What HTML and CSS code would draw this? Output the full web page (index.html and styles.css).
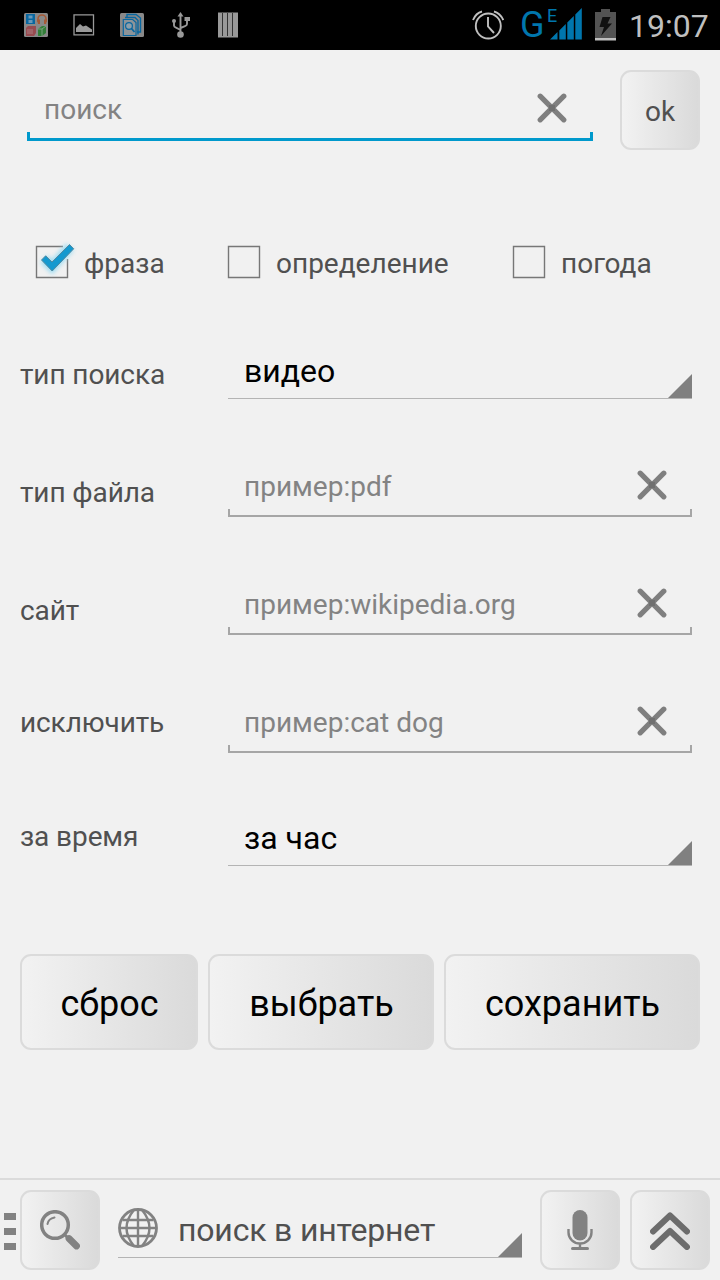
FILE: index.html
```html
<!DOCTYPE html>
<html lang="ru">
<head>
  <meta charset="UTF-8" />
  <title>поиск</title>
  <link rel="stylesheet" href="styles.css">
</head>
<body>

  <svg class="defs" width="0" height="0">
    <symbol id="clear" viewBox="0 0 30 30">
      <path d="M3.2 3.2L26.8 26.8M26.8 3.2L3.2 26.8" fill="none" stroke="#7f7f7f" stroke-width="5.2" stroke-linecap="round"/>
      <rect x="12" y="12" width="6" height="6" fill="#707070"/>
    </symbol>
  </svg>

  <div class="status-bar">
    <div class="notifications">
      <svg width="24" height="24" viewBox="0 0 24 24">
        <rect width="24" height="24" rx="1.5" fill="#898989"/>
        <path d="M2 1h9v10H2z" fill="#0867a0"/>
        <path d="M4.5 2.5h4v3h-4zM4.5 7h4v3h-4z" fill="#6898b8"/>
        <path d="M14 9V6a4 4 0 0 1 8 0v3" fill="none" stroke="#a65a36" stroke-width="1.6"/>
        <path d="M13 6.5h3V11h-2zM20 6.5h3l-1 4.5h-2z" fill="#a65a36"/>
        <path d="M2 15l2-2h8v7l-2 3H2z" fill="#984b50"/>
        <path d="M3 16h6v5H3z" fill="#a16468"/>
        <path d="M14 16l4-3h4v7l-4 3h-4z" fill="#327e38"/>
        <path d="M14 16h4v7M18 16l4-3" fill="none" stroke="#79a17c"/>
      </svg>
      <svg width="24" height="24" viewBox="0 0 24 24">
        <path d="M2 1.8h19.5v20H2z" fill="none" stroke="#999" stroke-width="1.3"/>
        <path d="M4 19v-4l4-4 3 2.5 3-1 6 4V19z" fill="#999"/>
      </svg>
      <svg width="24" height="24" viewBox="0 0 24 24">
        <rect width="24" height="24" rx="1.5" fill="#898989"/>
        <path d="M7 5V1.500h9L20.500 5v14H17M5 4.500h10L18 7.500v14" fill="none" stroke="#0867a0" stroke-width="1.400"/>
        <path d="M3.300 6.500h9.400l3.300 3v13H3.300z" fill="#8d9499" stroke="#0867a0" stroke-width="1.200"/>
        <circle cx="9" cy="13" r="3.400" fill="#8d9fab" stroke="#0867a0" stroke-width="1.200"/>
        <path d="M11.500 15.500l3 3.500" stroke="#0867a0" stroke-width="1.800"/>
      </svg>
      <svg width="24" height="26" viewBox="0 0 24 26">
        <path d="M12.500 4v18M6 10v3.500q0 1.500 2 2.200l4.500 2.300M19 8v4q0 1.500-2 2.200L12.500 16" fill="none" stroke="#999" stroke-width="1.900"/>
        <path d="M12.500 0l3 4.500h-6z" fill="#999"/>
        <circle cx="6" cy="9" r="2" fill="#999"/>
        <path d="M16.500 5H22v4h-5.500z" fill="#999"/>
        <circle cx="12.500" cy="22.500" r="3.300" fill="#999"/>
      </svg>
      <svg width="24" height="26" viewBox="0 0 24 26">
        <path d="M2 .5h20v25H2z" fill="#999"/>
        <path d="M6.500 1v23M11.500 1v23M16.500 1v23" stroke="#333" stroke-width="1"/>
      </svg>
    </div>
    <div class="system">
      <svg class="alarm" width="32" height="30" viewBox="0 0 32 30">
        <g fill="none" stroke="#bfbfbf" stroke-width="1.900">
          <circle cx="16.300" cy="16" r="12.500"/>
          <path d="M16 7v9.500l6 6.500M1 10Q4 3 10 1.500M31.300 10Q28 3 22 1.500"/>
        </g>
      </svg>
      <div class="network">G</div>
      <svg class="signal" width="34" height="34" viewBox="0 0 34 34">
        <text class="edge" x="-2" y="15">E</text>
        <path d="M1 32.500L8.500 25v7.500zM10.300 23.500L16.800 17v15.500h-6.500zM18.300 15.500L24.800 9v23.500h-6.500zM26.300 7.500L32.800 1v31.500h-6.500z" fill="#0076ad"/>
      </svg>
      <svg class="battery" width="22" height="32" viewBox="0 0 22 32">
        <path d="M6 0h9v3h6v26H0V3h6z" fill="#535353"/>
        <path d="M7.500 8h8l-3 6.500H17L6 27l3-9H4.500z" fill="#111"/>
        <path d="M0 29h21v2.500H0z" fill="#bfbfbf"/>
      </svg>
      <div class="clock">19:07</div>
    </div>
  </div>

  <div class="search-row">
    <div class="search-field field">
      <span>поиск</span>
      <svg class="clear" width="30" height="30"><use href="#clear"/></svg>
    </div>
    <button class="btn ok">ok</button>
  </div>

  <div class="checks">
    <div class="check">
      <svg width="42" height="42" viewBox="0 0 42 42">
        <path d="M28 6.500H1.500v31h31V19" fill="none" stroke="#777" stroke-width="1.400"/>
        <path class="glow" d="M9 19l8 8L35 7" fill="none" stroke="#9bdcf2" stroke-width="10"/>
        <path d="M6.500 20l4.200-4.200 6.300 6.200L34.500 4.500l4.200 4.300L17.200 31z" fill="#1499cf" stroke="#5289a0" stroke-width="1"/>
      </svg>
      <span>фраза</span>
    </div>
    <div class="check">
      <svg width="42" height="42" viewBox="0 0 42 42">
        <path d="M1.500 6.500h31v31h-31z" fill="none" stroke="#777" stroke-width="1.400"/>
      </svg>
      <span>определение</span>
    </div>
    <div class="check">
      <svg width="42" height="42" viewBox="0 0 42 42">
        <path d="M1.500 6.500h31v31h-31z" fill="none" stroke="#777" stroke-width="1.400"/>
      </svg>
      <span>погода</span>
    </div>
  </div>

  <div class="form">
    <div class="row">
      <div class="label">тип поиска</div>
      <div class="select"><span>видео</span><i class="corner"></i></div>
    </div>
    <div class="row">
      <div class="label">тип файла</div>
      <div class="field">
        <span>пример:pdf</span>
        <svg class="clear" width="30" height="30"><use href="#clear"/></svg>
      </div>
    </div>
    <div class="row">
      <div class="label">сайт</div>
      <div class="field">
        <span>пример:wikipedia.org</span>
        <svg class="clear" width="30" height="30"><use href="#clear"/></svg>
      </div>
    </div>
    <div class="row raised">
      <div class="label">исключить</div>
      <div class="field">
        <span>пример:cat dog</span>
        <svg class="clear" width="30" height="30"><use href="#clear"/></svg>
      </div>
    </div>
    <div class="row raised last">
      <div class="label">за время</div>
      <div class="select"><span>за час</span><i class="corner"></i></div>
    </div>
  </div>

  <div class="actions">
    <button class="btn">сброс</button>
    <button class="btn">выбрать</button>
    <button class="btn">сохранить</button>
  </div>

  <div class="bottom-bar">
    <div class="grip"><i></i><i></i><i></i></div>
    <button class="btn">
      <svg width="40" height="40" viewBox="0 0 40 40">
        <g fill="none" stroke="#828282" stroke-linecap="round">
          <circle cx="15" cy="15" r="13.300" stroke-width="3.500"/>
          <path d="M7.500 14Q8.500 8.500 14.500 7.500" stroke-width="2"/>
          <path d="M29 28.500l7.500 7.500" stroke-width="6.800"/>
          <path d="M25 25l4 4" stroke-width="3"/>
        </g>
      </svg>
    </button>
    <div class="engine select">
      <svg width="40" height="40" viewBox="0 0 40 40">
        <g fill="none" stroke="#828282" stroke-width="2.400">
          <circle cx="20" cy="20" r="18.500" stroke-width="2.800"/>
          <path d="M20 1v38M1 20h38M4.500 12h31M4.500 28h31"/>
          <path d="M16 2Q1 20 16 38M24 2Q39 20 24 38"/>
        </g>
      </svg>
      <span>поиск в интернет</span>
      <i class="corner"></i>
    </div>
    <button class="btn mic">
      <svg width="40" height="40" viewBox="0 0 40 40">
        <rect x="12.500" y="0" width="15" height="30.500" rx="7.500" fill="#828282"/>
        <path d="M8.500 19v3.500a11.500 11 0 0 0 23 0V19M20 33.500V38" fill="none" stroke="#828282" stroke-width="2.400"/>
        <path d="M12.500 38.500h15" stroke="#828282" stroke-width="3" stroke-linecap="round"/>
      </svg>
    </button>
    <button class="btn">
      <svg width="40" height="40" viewBox="0 0 40 40">
        <path d="M3 21.500L20 5.500l17 16M3 37l17-16 17 16" fill="none" stroke="#6c6c6c" stroke-width="6" stroke-linecap="round" stroke-linejoin="round"/>
      </svg>
    </button>
  </div>

</body>
</html>
```

FILE: styles.css
```css
* { box-sizing: border-box; }
body {
  margin: 0;
  width: 720px; height: 1280px;
  display: flex; flex-direction: column;
  background: #f1f1f1; color: #505050;
  font-family: Roboto, "Noto Sans", sans-serif; font-size: 28px;
  overflow: hidden;
}
svg { display: block; flex: none; }
span { white-space: nowrap; }
.defs { display: none; }

.status-bar {
  height: 50px; flex: none;
  display: flex; align-items: center; justify-content: space-between;
  padding: 0 12px 0 24px;
  background: #000; color: #bfbfbf;
}
.notifications { display: flex; align-items: center; gap: 24px; }
.system { display: flex; align-items: center; height: 50px; }
.alarm { margin-right: 16px; }
.network { width: 29px; font-size: 36px; line-height: 46px; color: #0076ad; }
.signal { margin-bottom: 2px; overflow: visible; }
.edge { font-size: 18px; fill: #0076ad; }
.battery { margin: 0 12px 0 12px; }
.clock { width: 79px; font-size: 32px; line-height: 50px; padding-top: 1px; }

/* text boxes and spinners */
.field, .select {
  position: relative;
  display: flex; align-items: center;
  height: 61px; padding: 2px 0 0 16px;
}
.field { color: #838383; border-bottom: 2px solid #a6a6a6; }
.field::before, .field::after {
  content: ""; position: absolute; bottom: 0;
  width: 2px; height: 6px; background: #a6a6a6;
}
.field::before { left: 0; }
.field::after { right: 0; }
.clear { margin: 0 25px 4px auto; }
.select {
  height: 60px; padding-top: 5px;
  border-bottom: 1px solid #b4b4b4;
  color: #000; font-size: 32px;
}
.corner {
  position: absolute; right: 0; bottom: 0;
  width: 24px; height: 24px;
  background: #808080; clip-path: polygon(100% 0, 100% 100%, 0 100%);
}

.btn {
  display: flex; align-items: center; justify-content: center;
  width: 80px; height: 80px; padding: 0; flex: none;
  border: 2px solid #dbdbdb; border-radius: 11px;
  background: linear-gradient(90deg, #f2f2f2, #dadada);
  color: #000; font-family: inherit; font-size: 36px;
}

.search-row {
  display: flex; justify-content: space-between;
  padding: 20px 20px 0 27px;
}
.search-field { width: 566px; height: 71px; padding: 10px 0 0 17px; border-bottom: 3px solid #0099cc; }
.search-field::before, .search-field::after { width: 3px; background: #0099cc; }
.search-field .clear { margin: 0 26px 2px auto; }
.ok { padding-top: 2px; color: #505050; font-size: 28px; }

.checks {
  display: grid; grid-template-columns: 192px 285px auto;
  margin-top: 90px; padding-left: 35px; height: 42px;
}
.check { display: flex; align-items: center; gap: 7px; }
.check span { padding-top: 4px; }
.glow { filter: blur(2px); }

.form { margin-top: -1px; }
.row {
  display: grid; grid-template-columns: 208px 464px; align-items: end;
  height: 118px; padding-left: 20px;
}
.label { line-height: 40px; margin-bottom: 4px; letter-spacing: -.1px; }
.raised .label { margin-bottom: 10px; }
.last { height: 113px; }
.last .label { margin-bottom: 9px; }

.actions {
  display: grid; grid-template-columns: 178px 226px 256px; gap: 10px;
  margin-top: 88px; padding: 0 20px;
}
.actions .btn { width: 100%; height: 96px; padding: 4px 0 0 1px; }

.bottom-bar {
  display: flex; align-items: center;
  height: 102px; margin-top: auto; padding: 0 10px 0 4px;
  border-top: 2px solid #dbdbdb;
}
.grip { display: flex; flex-direction: column; gap: 8px; width: 16px; padding-top: 3px; }
.grip i { width: 12px; height: 7px; background: #828282; }
.engine {
  width: 404px; height: 68px; margin: 0 18px 12px; padding: 9px 0 0;
  gap: 20px; color: #505050; font-size: 32px;
}
.engine span { padding-top: 4px; letter-spacing: -.18px; }
.mic { margin-right: 10px; }
```
